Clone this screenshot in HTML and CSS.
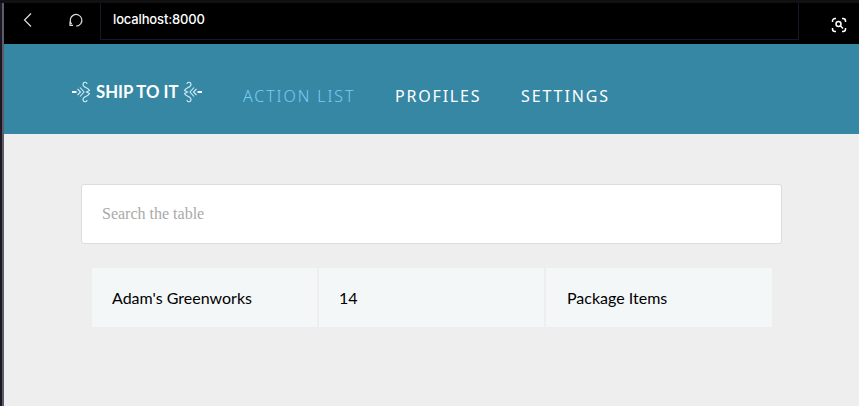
FILE: index.html
```html
<!DOCTYPE html>
<html lang="en">
<head>
<meta charset="utf-8">
<title>Ship To It</title>
<link rel="stylesheet" href="styles.css">
</head>
<body>
<div class="window">
  <div class="toolbar">
    <svg class="back" width="12" height="16" viewBox="0 0 12 16"><path d="M9 1.5 2.5 8 9 14.5"/></svg>
    <svg class="reload" width="16" height="16" viewBox="0 0 16 16"><path d="M3.600 12A5.800 5.800 0 1 1 8.300 14.100M2 9.500v3.800h3"/></svg>
    <div class="address">localhost:8000</div>
    <svg class="lens" width="16" height="16" viewBox="0 0 16 16"><path d="M1.500 5V4a2.500 2.500 0 0 1 2.500-2.500h1M11 1.500h1A2.500 2.500 0 0 1 14.500 4v1M14.500 11v1a2.500 2.500 0 0 1-2.500 2.500h-1M5 14.500H4A2.500 2.500 0 0 1 1.500 12v-1"/><circle cx="7.500" cy="7" r="2.500"/><path d="m9.500 9 2.500 2.500"/></svg>
  </div>
  <header class="header">
    <div class="logo">
      <svg class="flourish" width="20" height="22" viewBox="0 0 20 22"><path class="bar" d="M1 11h4.500"/><path d="M6.500 8 9.500 11l-3 3M9 6.500l4 4.500-4 4.500M16 3c0-2.500-4-2.500-4 .5C12 7 17.500 6.500 18.500 9.500L15.500 11l3 1.500C17.500 15.500 12 15 12 18.500c0 3 4 3 4 .5"/></svg>
      <span class="logo-text">SHIP TO IT</span>
      <svg class="flourish flip" width="20" height="22" viewBox="0 0 20 22"><path class="bar" d="M1 11h4.500"/><path d="M6.500 8 9.500 11l-3 3M9 6.500l4 4.500-4 4.500M16 3c0-2.500-4-2.500-4 .5C12 7 17.500 6.500 18.500 9.500L15.500 11l3 1.500C17.500 15.500 12 15 12 18.500c0 3 4 3 4 .5"/></svg>
    </div>
    <nav class="nav">
      <a class="item active">ACTION LIST</a>
      <a class="item profiles">PROFILES</a>
      <a class="item settings">SETTINGS</a>
    </nav>
  </header>
  <main class="main">
    <input class="search" type="text" placeholder="Search the table">
    <div class="row">
      <div class="cell">Adam's Greenworks</div>
      <div class="cell">14</div>
      <div class="cell last">Package Items</div>
    </div>
  </main>
</div>
</body>
</html>
```
FILE: styles.css
```css
* { box-sizing: border-box; }
body {
  margin: 0;
  height: 406px;
  overflow: hidden;
  background: #1c1722;
  border-top: 3px solid #111;
  padding-left: 2px;
}
.window {
  height: 403px;
  border-left: 2px solid #5c5b69;
  background: #eee;
  font-family: Lato, sans-serif;
}
.toolbar {
  height: 41px;
  display: flex;
  background: #000;
  fill: none;
  stroke: #ddd;
  stroke-width: 1.2;
}
.back { margin: 9px 0 0 18px; }
.reload { margin: 9px 0 0 34px; }
.address {
  width: 699px;
  height: 37px;
  margin-left: 16px;
  padding-left: 12px;
  border: 1px solid #17172a;
  border-top: 0;
  color: #fff;
  font: 500 13px/33px Inter, sans-serif;
  letter-spacing: -0.15px;
}
.lens {
  margin: 14px 0 0 32px;
  stroke: #fff;
  stroke-width: 1.5;
}
.header {
  height: 90px;
  display: flex;
  padding-left: 67px;
  background: #3687a4;
}
.logo {
  display: flex;
  width: 133px;
  height: 22px;
  margin-top: 37px;
  color: #fff;
}
.flourish {
  flex: none;
  fill: none;
  stroke: #d3eef7;
  stroke-width: 1.1;
}
.bar { stroke: #fff; stroke-width: 2; }
.flip { transform: scaleX(-1); }
.logo-text {
  width: 92px;
  padding-left: 5px;
  font: 700 16.7px/22px Lato, sans-serif;
  white-space: nowrap;
}
.nav {
  display: flex;
  margin: 40px 0 0 39px;
  color: #fff;
  font: 300 16px/24px "Noto Sans", sans-serif;
}
.item { letter-spacing: 1.9px; white-space: nowrap; }
.active { width: 152px; color: #79cdf2; }
.profiles { width: 126px; font-weight: 400; letter-spacing: 1.8px; }
.settings { font-weight: 400; }
.main { padding: 50px 0 0 77px; }
.search {
  display: block;
  width: 701px;
  height: 60px;
  padding: 0 20px;
  border: 1px solid #dcdcdc;
  border-radius: 3px;
  background: #fff;
  font: 16px "Liberation Serif", serif;
}
.search::placeholder { color: #a9a9a9; opacity: 1; }
.row {
  display: grid;
  grid-template-columns: 225px 225px 226px;
  gap: 2px;
  margin: 24px 0 0 11px;
}
.cell {
  height: 59px;
  padding-left: 20px;
  background: #f3f7f8;
  color: #000;
  font-size: 16px;
  line-height: 60px;
}
.last { padding-left: 21px; }
```
